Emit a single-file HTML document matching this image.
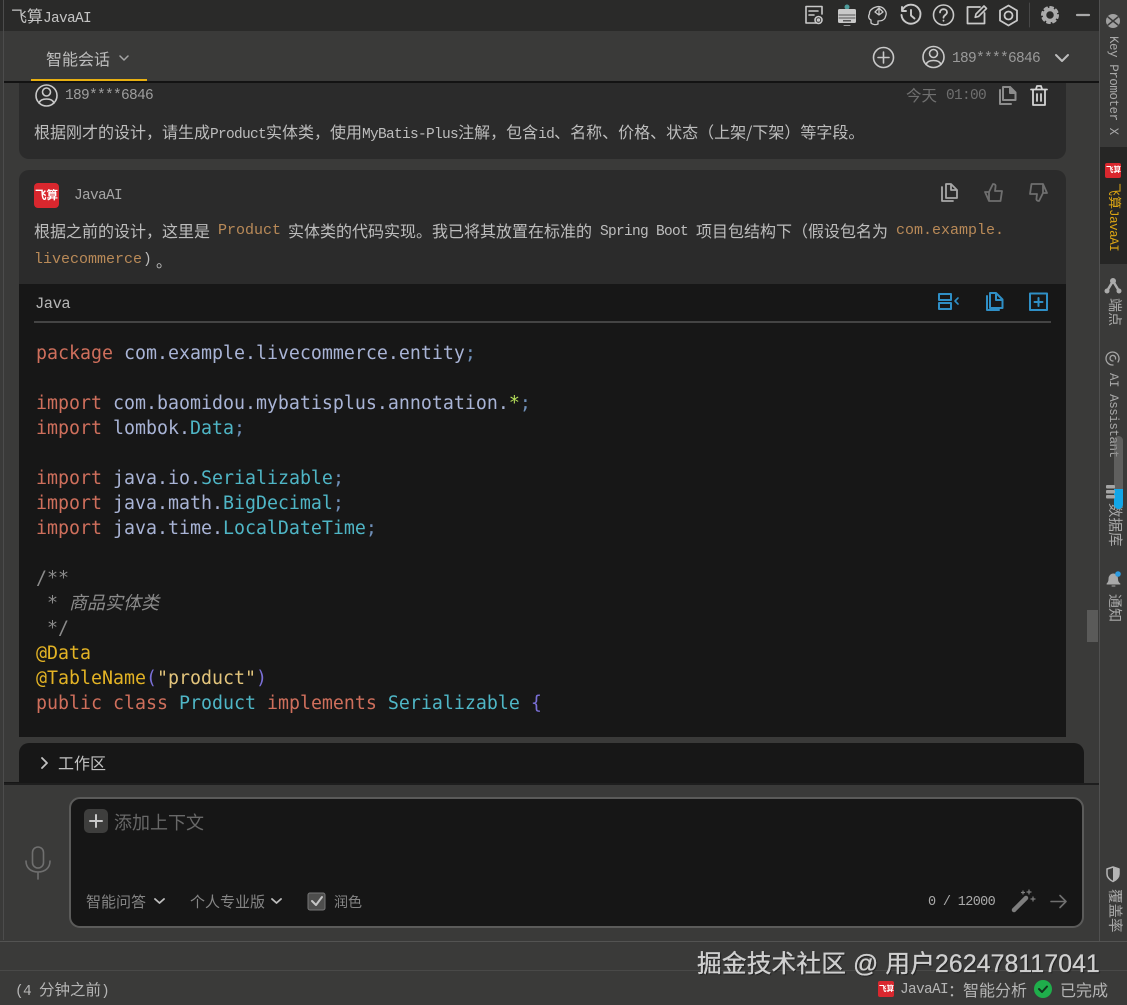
<!DOCTYPE html>
<html><head><meta charset="utf-8">
<style>
html,body{margin:0;padding:0;background:#3a3a39;}
#r{position:relative;width:1127px;height:1005px;overflow:hidden;background:#3a3a39;font-family:"Liberation Mono","Noto Sans CJK SC",monospace;color:#bdbdbd;}
.b{position:absolute;}
.t{position:absolute;white-space:pre;font-size:16px;line-height:20px;font-family:"Noto Sans CJK SC",sans-serif;color:#bdbdbd;}
.m{font-family:"Liberation Mono",monospace;font-size:14.5px;letter-spacing:-0.7px;}
.c{position:absolute;white-space:pre;font-family:"Liberation Mono",monospace;font-size:15px;line-height:20px;color:#b98a58;}
.v{position:absolute;writing-mode:vertical-rl;text-orientation:sideways;white-space:pre;font-family:"Liberation Mono","Noto Sans CJK SC",monospace;font-size:12.5px;letter-spacing:-0.45px;line-height:14px;color:#a9a9a9;}
.z{font-size:14px;letter-spacing:0;}
pre{position:absolute;margin:0;left:36px;top:341px;font-family:"DejaVu Sans Mono","Noto Sans CJK SC",monospace;font-size:18.27px;line-height:25px;color:#a9b4d6;}
.k{color:#cf6f5c}.d{color:#4fb6c6}.p{color:#6f8fb8}.a{color:#e3b325}.s{color:#e2c47c}.q{color:#7a6fd6}.g{color:#8b8b8b}.w{color:#b6e05a}
</style></head><body><div id="r">
<!-- backgrounds -->
<div class="b" style="left:0;top:0;width:1099px;height:31px;background:#2a2a29"></div>
<div class="b" style="left:0;top:31px;width:1099px;height:50px;background:#3a3a39"></div>
<div class="b" style="left:4px;top:81px;width:1095px;height:2px;background:#131313"></div>
<div class="b" style="left:31px;top:79px;width:116px;height:2px;background:#e8b012"></div>
<div class="b" style="left:3px;top:0;width:1px;height:940px;background:#4c4c4c"></div>
<div class="b" style="left:19px;top:83px;width:1047px;height:76px;background:#2b2b2b;border-radius:0 0 10px 10px"></div>
<div class="b" style="left:19px;top:170px;width:1047px;height:114px;background:#2b2b2b;border-radius:10px 10px 0 0"></div>
<div class="b" style="left:19px;top:284px;width:1047px;height:453px;background:#171717"></div>
<div class="b" style="left:34px;top:321px;width:1017px;height:2px;background:#444"></div>
<div class="b" style="left:1087px;top:610px;width:11px;height:32px;background:#5a5a59"></div>
<div class="b" style="left:19px;top:743px;width:1065px;height:40px;background:#171717;border-radius:10px 10px 0 0"></div>
<div class="b" style="left:4px;top:782px;width:15px;height:1px;background:#171717"></div>
<div class="b" style="left:4px;top:783px;width:1095px;height:2px;background:#1e1e1e"></div>
<div class="b" style="left:69px;top:797px;width:1011px;height:127px;background:#161616;border:2px solid #5b5b5a;border-radius:11px"></div>
<div class="b" style="left:84px;top:809px;width:24px;height:24px;background:#3e3e3d;border-radius:5px"></div>
<div class="b" style="left:0;top:941px;width:1127px;height:1px;background:#535352"></div>
<div class="b" style="left:0;top:970px;width:1127px;height:1px;background:#494948"></div>
<!-- sidebar -->
<div class="b" style="left:1099px;top:0;width:1px;height:941px;background:#505050"></div>
<div class="b" style="left:1100px;top:147px;width:27px;height:117px;background:#262625"></div>

<!-- title/tab text -->
<div class="t" style="left:11px;top:5px;color:#c4c4c4">飞算<span class="m">JavaAI</span></div>
<div class="t" style="left:46px;top:48px;color:#bdbdbd">智能会话</div>
<div class="t m" style="left:952px;top:49px;color:#9a9a9a">189****6846</div>
<!-- card 1 -->
<div class="t m" style="left:65px;top:86px;color:#9e9e9e">189****6846</div>
<div class="t" style="left:906px;top:85px;color:#6f6f6f;font-size:15.5px">今天</div>
<div class="t m" style="left:946px;top:86px;color:#6f6f6f">01:00</div>
<div class="t" style="left:34px;top:121px">根据刚才的设计，请生成<span class="m">Product</span>实体类，使用<span class="m">MyBatis-Plus</span>注解，包含<span class="m">id</span>、名称、价格、状态（上架/下架）等字段。</div>
<!-- card 2 -->
<div class="b" style="left:34px;top:183px;width:25px;height:25px;background:#d9272e;border-radius:4px"></div>
<div class="t" style="left:35px;top:186px;font-size:11.5px;font-weight:700;color:#fff;line-height:18px">飞算</div>
<div class="t m" style="left:74px;top:186px;color:#a6a6a6">JavaAI</div>
<div class="t" style="left:34px;top:220px">根据之前的设计，这里是</div>
<div class="c" style="left:218px;top:221px">Product</div>
<div class="t" style="left:288px;top:220px">实体类的代码实现。我已将其放置在标准的</div>
<div class="t m" style="left:600px;top:222px">Spring Boot</div>
<div class="t" style="left:696px;top:220px">项目包结构下（假设包名为</div>
<div class="c" style="left:896px;top:221px">com.example.</div>
<div class="c" style="left:34px;top:250px">livecommerce</div>
<div class="t m" style="left:143px;top:250px">)</div>
<div class="t" style="left:156px;top:250px">。</div>
<div class="t m" style="left:35px;top:294px;font-size:15.5px;letter-spacing:-0.5px;color:#b5b5b5">Java</div>
<!-- code -->
<pre><span class="k">package</span> com.example.livecommerce.entity<span class="p">;</span>

<span class="k">import</span> com.baomidou.mybatisplus.annotation.<span class="w">*</span><span class="p">;</span>
<span class="k">import</span> lombok.<span class="d">Data</span><span class="p">;</span>

<span class="k">import</span> java.io.<span class="d">Serializable</span><span class="p">;</span>
<span class="k">import</span> java.math.<span class="d">BigDecimal</span><span class="p">;</span>
<span class="k">import</span> java.time.<span class="d">LocalDateTime</span><span class="p">;</span>

<span class="g">/**</span>
<span class="g"> * <i style="font-size:18px">商品实体类</i></span>
<span class="g"> */</span>
<span class="a">@Data</span>
<span class="a">@TableName</span><span class="q">(</span><span class="s">"product"</span><span class="q">)</span>
<span class="k">public class</span> <span class="d">Product</span> <span class="k">implements</span> <span class="d">Serializable</span> <span class="q">{</span></pre>
<!-- workspace & input -->
<div class="t" style="left:58px;top:752px;color:#c2c2c2">工作区</div>
<div class="t" style="left:114px;top:811px;font-size:18px;line-height:22px;color:#686868">添加上下文</div>
<div class="t" style="left:86px;top:892px;font-size:15px;color:#858585">智能问答</div>
<div class="t" style="left:190px;top:892px;font-size:15px;color:#858585">个人专业版</div>
<div class="t" style="left:334px;top:892px;font-size:14px;color:#858585">润色</div>
<div class="t m" style="left:928px;top:893px;font-size:13.5px;letter-spacing:-0.65px;color:#a9a9a9">0 / 12000</div>
<!-- status -->
<div class="t m" style="left:15px;top:979px;color:#b5b5b5">(4 <span style="font-family:'Noto Sans CJK SC',sans-serif;font-size:15.5px;letter-spacing:0">分钟之前</span>)</div>
<div class="b" style="left:878px;top:981px;width:16px;height:16px;background:#d9272e;border-radius:2px"></div>
<div class="t" style="left:879px;top:981px;font-size:7.5px;font-weight:700;color:#fff;line-height:16px">飞算</div>
<div class="t m" style="left:900px;top:980px;color:#b5b5b5">JavaAI</div>
<div class="t" style="left:948px;top:979px;color:#b5b5b5">：</div>
<div class="t" style="left:963px;top:979px;color:#b5b5b5">智能分析</div>
<div class="t" style="left:1060px;top:979px;color:#b5b5b5">已完成</div>
<!-- watermark -->
<div class="t" style="left:697px;top:950px;font-family:'Liberation Sans','Noto Sans CJK SC',sans-serif;font-size:24.7px;line-height:30px;letter-spacing:.16px;-webkit-text-stroke:.35px #cfcfcf;color:#cfcfcf;text-shadow:1px 1px 1px #1c1c1c">掘金技术社区 @ 用户262478117041</div>
<!-- vertical sidebar text -->
<div class="v" style="left:1106px;top:36px">Key Promoter X</div>
<div class="b" style="left:1105px;top:163px;width:16px;height:15px;background:#d9272e;border-radius:2px"></div>
<div class="v" style="left:1106px;top:163px;font-size:7.5px;letter-spacing:0;line-height:14px;font-weight:700;color:#fff;font-family:'Noto Sans CJK SC',sans-serif;writing-mode:horizontal-tb">飞算</div>
<div class="v" style="left:1106px;top:183px;color:#dba514"><span class="z" style="font-size:13px">飞算</span>JavaAI</div>
<div class="v z" style="left:1106px;top:298px">端点</div>
<div class="v" style="left:1106px;top:373px">AI Assistant</div>
<div class="v z" style="left:1106px;top:503px;font-size:14.5px">数据库</div>
<div class="v z" style="left:1106px;top:594px">通知</div>
<div class="v z" style="left:1106px;top:889px;font-size:14.5px">覆盖率</div>
<div class="b" style="left:1114px;top:436px;width:9px;height:74px;background:rgba(125,125,125,.55);border-radius:5px"></div>
<div class="b" style="left:1114px;top:489px;width:9px;height:20px;background:#12a6e8;border-radius:0 0 5px 5px"></div>

<!-- icons -->
<svg class="b" style="left:0;top:0" width="1127" height="1005" viewBox="0 0 1127 1005" fill="none" stroke-linecap="round" stroke-linejoin="round">
<g stroke="#c9c9c9" stroke-width="1.6">
 <!-- doc gear -->
 <path d="M816 23H806V6.500H822V14M809 11h9M809 15h5"/>
 <circle cx="818.500" cy="20" r="3.500"/><circle cx="818.500" cy="20" r="1"/>
 <!-- brain head -->
 <path d="M876 7c-4 1-7 4-6.500 7-1.500 2-1 5 1.500 6v3c2 2 5 2 7 1v-3c4 0 6-1 7-3l1-3c1-3-2-7-5-8-1.500-.5-3.500-.5-5 0zM879 8v7M875 12l4-4 4 4-4 3z" stroke-width="1.300"/>
 <!-- history -->
 <path d="M903 9a9.500 9.500 0 1 1-1.500 6M902 7v4h4M911 10v5.500l3.500 3" stroke-width="1.900"/>
 <!-- help -->
 <circle cx="943.500" cy="15" r="10"/>
 <path d="M940 12.500c0-2 1.500-3.300 3.500-3.300s3.500 1.300 3.500 3c0 2.800-3.500 2.800-3.500 5.500M943.500 20.500v.3" stroke-width="1.800"/>
 <!-- edit -->
 <path d="M980 7h-12.500v16.500h17V13" stroke-width="1.800"/><path d="M984 6l2.500 2.500-8 8-3.300.8.800-3.300z" stroke-width="1.600"/>
 <!-- hexagon -->
 <path d="M1008.500 5.500l8.500 5v10l-8.500 5-8.500-5v-10z" stroke-width="1.800"/><circle cx="1008.500" cy="15.500" r="4" stroke-width="1.800"/>
 <!-- minus -->
 <path d="M1077 15h12" stroke="#a9a9a9" stroke-width="2.200"/>
 <!-- tab row -->
 <circle cx="883.500" cy="57.500" r="10"/><path d="M878 57.500h11M883.500 52v11"/>
 <circle cx="933.500" cy="57" r="10.500"/><circle cx="933.500" cy="53.500" r="4"/><path d="M926 64.500c1-3 4-4 7.500-4s6.500 1 7.500 4"/>
 <!-- card user -->
 <circle cx="46.500" cy="95.500" r="10.500"/><circle cx="46.500" cy="92" r="4"/><path d="M39 103c1-3 4-4 7.500-4s6.500 1 7.500 4"/>
 <!-- trash -->
 <path d="M1031 89.500h16M1036 89l1-3h4l1 3M1033 90v15h12V90M1037 94v7M1041 94v7" stroke-width="1.800" stroke="#d4d4d4"/>
</g>
<path d="M1029.500 3v24" stroke="#474747"/>
<!-- printer/bot -->
<circle cx="847" cy="7" r="2.500" fill="#4f9c9c"/>
<rect x="838" y="9" width="18" height="14" rx="1.500" fill="#c9c9c9"/><path d="M839 15h16M839 18h16" stroke="#555"/><rect x="843" y="20" width="8" height="1.500" fill="#555"/><path d="M844 25.500h6" stroke="#999"/>
<!-- gear -->
<circle cx="1050" cy="15" r="5.500" stroke="#ababab" stroke-width="3.500"/><circle cx="1050" cy="15" r="8" stroke="#ababab" stroke-width="2" stroke-dasharray="3 3.280"/>
<!-- chevrons -->
<path d="M120 56l4 4 4-4" stroke="#a5a5a5" stroke-width="1.500"/>
<path d="M1056 55l6 6 6-6" stroke="#bdbdbd" stroke-width="2"/>
<path d="M42 758l5 5-5 5" stroke="#c2c2c2" stroke-width="1.800"/>
<path d="M155 899l4.500 4 4.500-4M272 899l4.500 4 4.500-4" stroke="#bdbdbd" stroke-width="1.800"/>
<!-- copy icons -->
<g stroke="#8c8c8c" stroke-width="2"><path d="M1003 87h7l5.500 5.500V100h-12.500zM1000 90v14h11" /><path d="M1010 87v6h5.500" fill="#8c8c8c"/></g>
<g stroke="#a8a8a8" stroke-width="1.800"><path d="M946 184h5l6 6v8h-11zM942 187v14h11M951 184v6h6"/></g>
<path d="M985 192h4l4-8c2 0 3 1 2.500 3l-.5 4h7l-1.500 10h-11.500zM989 192v9" stroke="#6f6f6f" stroke-width="1.800"/>
<path d="M1047 193h-4l-4 8c-2 0-3-1-2.500-3l.5-4h-7l1.500-10h11.500zM1043 193v-9" stroke="#6f6f6f" stroke-width="1.800"/>
<!-- blue -->
<g stroke="#2f8fc6" stroke-width="2">
 <rect x="939" y="294" width="12" height="6"/><rect x="939" y="303" width="12" height="6"/><path d="M958 298l-3 3 3 3" stroke-width="1.600"/>
 <path d="M990 293h6l6.500 6.500V308h-12.500zM987 296v14h12M996 293v7h6.500"/>
 <rect x="1030" y="293.500" width="17" height="16.500"/><path d="M1034.500 302h8M1038.500 298v8"/>
</g>
<!-- sidebar icons -->
<circle cx="1113" cy="21" r="7" fill="#a0a0a0"/><path d="M1108 17l10 8M1118 17l-10 8" stroke="#3a3a39" stroke-width="1.500"/>
<path d="M1107 291l6-10 6 10" stroke="#ababab" stroke-width="2.500"/><circle cx="1113" cy="281" r="3" fill="#ababab"/><circle cx="1107" cy="291" r="2.500" fill="#ababab"/><circle cx="1119" cy="291" r="2.500" fill="#ababab"/>
<path d="M1113 365a6.500 6.500 0 1 1 5-3M1113 361a2.800 2.800 0 1 1 2.500-2" stroke="#a5a5a5" stroke-width="1.300"/>
<g fill="#a5a5a5"><rect x="1106" y="485" width="9" height="3.500" rx="1"/><rect x="1106" y="490" width="9" height="3.500" rx="1"/><rect x="1106" y="495" width="9" height="3.500" rx="1"/></g>
<path d="M1107 584c1-1 2-2 2-5s2-5 4.500-5 4 2 4 5 1 4 2.500 5zM1112 586h3" fill="#a9a9a9" stroke="#a9a9a9"/><circle cx="1118" cy="574" r="2.800" fill="#2d9be0"/>
<path d="M1113 867l6 2v5c0 4-3 6-6 7.500-3-1.500-6-3.500-6-7.500v-5z" stroke="#b5b5b5" stroke-width="1.500"/><path d="M1113 867l6 2v5c0 4-3 6-6 7.500z" fill="#b5b5b5"/>
<!-- input icons -->
<path d="M90 821h12M96 815v12" stroke="#c9c9c9" stroke-width="2"/>
<rect x="32.500" y="847" width="11" height="21" rx="5.500" stroke="#6f6f6f" stroke-width="1.600"/><path d="M26 861c0 7 5 11 12 11s12-4 12-11M38 872v7" stroke="#6f6f6f" stroke-width="1.600"/>
<rect x="308" y="893" width="17" height="17" rx="2" fill="#4e4e4d" stroke="#777"/><path d="M312 901l4 4 6-8" stroke="#c5c5c5" stroke-width="2"/>
<path d="M1014 910l12-12" stroke="#7e7e7e" stroke-width="4.500"/><path d="M1029 890v4M1027 892h4M1033 897v4M1031 899h4M1023 891v3M1021.500 892.500h3" stroke="#7e7e7e" stroke-width="1.200"/>
<path d="M1051 901.500h15M1060 895.500l6 6-6 6" stroke="#6f6f6f" stroke-width="1.600"/>
<!-- green check -->
<circle cx="1043" cy="989" r="9" fill="#1fae4b"/><path d="M1039 989l3 3 5-5.500" stroke="#12331d" stroke-width="2"/>
</svg>
</div></body></html>
